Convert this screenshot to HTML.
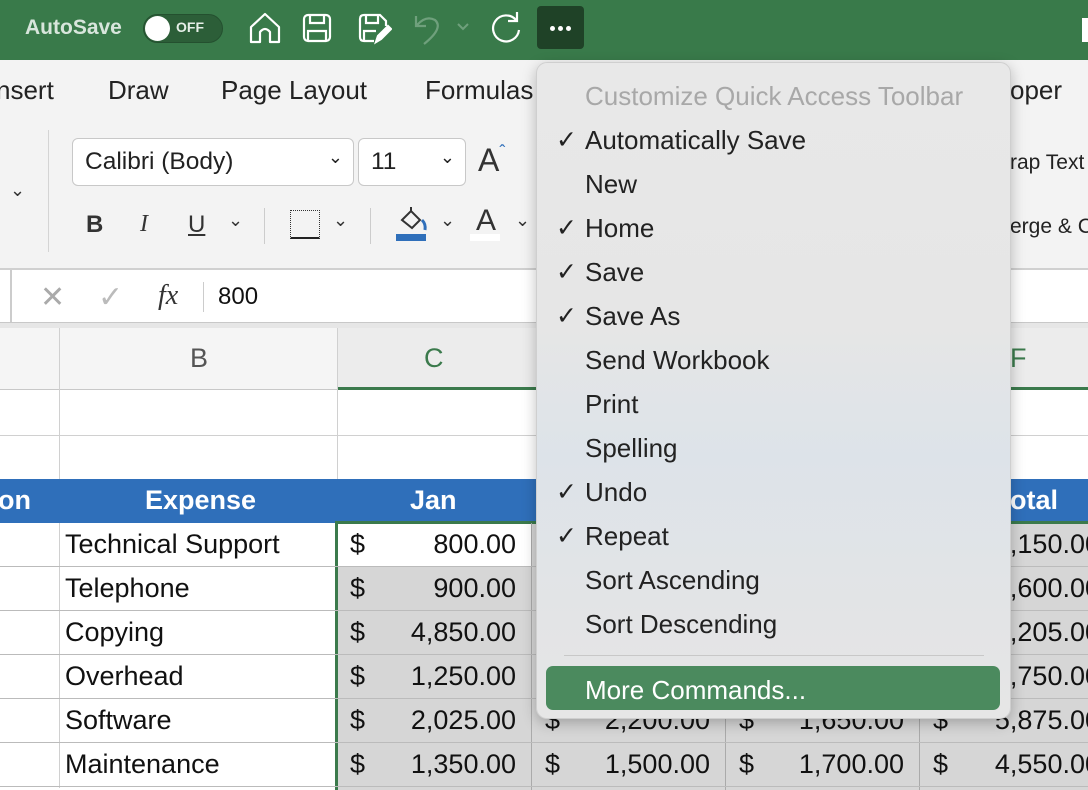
<!DOCTYPE html>
<html><head><meta charset="utf-8"><style>
*{margin:0;padding:0;box-sizing:border-box}
body{width:1088px;height:790px;overflow:hidden;position:relative;background:#fff;font-family:"Liberation Sans",sans-serif}
.a{position:absolute;white-space:nowrap}
.top{left:0;top:0;width:1088px;height:60px;background:#397a4a}
.rib{left:0;top:60px;width:1088px;height:208px;background:#f3f3f3}
.tab{top:75px;font-size:26px;color:#222}
.box{background:#fff;border:1px solid #c8c8c8;border-radius:6px;height:48px;font-size:24.5px;color:#222;padding:9px 12px}
.cell{font-family:"Liberation Sans",sans-serif;font-size:27px;color:#111}
.gl{background:#d6d6d6}
.mi{left:585px;font-size:26px;color:#222}
.ck{left:556px;font-size:25px;color:#222}
</style></head><body>
<div class="a top"></div>
<div class="a" style="left:25px;top:16px;color:#d8e6dc;font-size:21px;font-weight:bold">AutoSave</div>
<div class="a" style="left:143px;top:14px;width:80px;height:29px;border-radius:15px;background:#2c5e38;border:1px solid #24502f"></div>
<div class="a" style="left:145px;top:16px;width:25px;height:25px;border-radius:50%;background:#fff"></div>
<div class="a" style="left:176px;top:19px;color:#e6efe8;font-size:14px;font-weight:bold">OFF</div>
<svg class="a" style="left:248px;top:12px" width="34" height="32" viewBox="0 0 34 32" fill="none" stroke="#fff" stroke-width="2.2" stroke-linejoin="round"><path d="M3 15 L17 2 L31 15 V30 H22 V20 Q17 14 12 20 V30 H3 Z"/></svg>
<svg class="a" style="left:302px;top:13px" width="30" height="30" viewBox="0 0 30 30" fill="none" stroke="#fff" stroke-width="2.2"><rect x="2" y="2" width="26" height="26" rx="4"/><path d="M8 2 V10 H22 V2 M6 28 V18 H24 V28"/></svg>
<svg class="a" style="left:358px;top:13px" width="34" height="32" viewBox="0 0 34 32" fill="none" stroke="#fff" stroke-width="2.2"><path d="M16 28 H6 Q2 28 2 24 V6 Q2 2 6 2 H22 L28 8 V13 M8 2 V10 H20 V2 M6 28 V18 H18"/><path d="M18 29 L20 23 L30 13 L33 16 L23 26 Z" fill="#fff"/></svg>
<svg class="a" style="left:412px;top:12px" width="34" height="34" viewBox="0 0 34 34" fill="none" stroke="#6fa07c" stroke-width="2.2"><path d="M4 4 V14 H14 M5 13 Q14 3 23 8 Q32 16 12 32"/></svg>
<svg class="a" style="left:456px;top:22px" width="14" height="10" viewBox="0 0 14 10" fill="none" stroke="#6fa07c" stroke-width="2"><path d="M2 2 L7 7 L12 2"/></svg>
<svg class="a" style="left:488px;top:10px" width="36" height="36" viewBox="0 0 36 36" fill="none" stroke="#fff" stroke-width="2.2"><path d="M28 10 A13 13 0 1 0 31 20"/><path d="M29 2 V11 H20"/></svg>
<div class="a" style="left:537px;top:6px;width:47px;height:43px;background:#1f4227;border-radius:4px"></div>
<div class="a" style="left:550px;top:26px;width:5px;height:5px;border-radius:50%;background:#fff"></div>
<div class="a" style="left:558px;top:26px;width:5px;height:5px;border-radius:50%;background:#fff"></div>
<div class="a" style="left:566px;top:26px;width:5px;height:5px;border-radius:50%;background:#fff"></div>
<div class="a" style="left:1082px;top:18px;width:6px;height:24px;background:#fff"></div>

<div class="a rib"></div>
<div class="a tab" style="left:-4px">nsert</div>
<div class="a tab" style="left:108px">Draw</div>
<div class="a tab" style="left:221px">Page Layout</div>
<div class="a tab" style="left:425px">Formulas</div>
<div class="a tab" style="left:1010px">oper</div>
<div class="a" style="left:48px;top:130px;width:1px;height:122px;background:#d4d4d4"></div>
<div class="a" style="left:10px;top:180px;font-size:18px;color:#333">⌄</div>
<div class="a box" style="left:72px;top:138px;width:282px">Calibri (Body)<span style="position:absolute;right:10px;top:8px;font-size:18px">⌄</span></div>
<div class="a box" style="left:358px;top:138px;width:108px">11<span style="position:absolute;right:10px;top:8px;font-size:18px">⌄</span></div>
<div class="a" style="left:478px;top:142px;font-size:32px;color:#333">A<span style="color:#2f6fba;font-size:18px;vertical-align:top">ˆ</span></div>
<div class="a" style="left:86px;top:211px;font-size:24px;font-weight:bold;color:#333">B</div>
<div class="a" style="left:140px;top:211px;font-size:24px;font-style:italic;font-family:'Liberation Serif';color:#333">I</div>
<div class="a" style="left:188px;top:211px;font-size:24px;text-decoration:underline;color:#333">U</div>
<div class="a" style="left:228px;top:210px;font-size:18px;color:#333">⌄</div>
<div class="a" style="left:264px;top:208px;width:1px;height:36px;background:#ccc"></div>
<div class="a" style="left:290px;top:210px;width:30px;height:29px;border:1px dotted #333;border-bottom:2px solid #222"></div>
<div class="a" style="left:333px;top:210px;font-size:18px;color:#333">⌄</div>
<div class="a" style="left:370px;top:208px;width:1px;height:36px;background:#ccc"></div>
<svg class="a" style="left:398px;top:206px" width="32" height="28" viewBox="0 0 32 28" fill="none" stroke="#333" stroke-width="2"><path d="M4 14 L13 5 L22 14 L14 22 Z M13 5 L13 1"/><path d="M24 14 Q28 18 27 24" stroke="#2f6fba" stroke-width="3"/></svg>
<div class="a" style="left:396px;top:234px;width:30px;height:7px;background:#2f6fba"></div>
<div class="a" style="left:440px;top:210px;font-size:18px;color:#333">⌄</div>
<div class="a" style="left:476px;top:204px;font-size:30px;color:#333">A</div>
<div class="a" style="left:470px;top:234px;width:30px;height:7px;background:#fff"></div>
<div class="a" style="left:515px;top:210px;font-size:18px;color:#333">⌄</div>
<div class="a" style="left:1010px;top:151px;font-size:21px;color:#222">rap Text</div>
<div class="a" style="left:1010px;top:215px;font-size:21px;color:#222">erge &amp; C</div>

<div class="a" style="left:0;top:268px;width:1088px;height:2px;background:#d0d0d0"></div>
<div class="a" style="left:0;top:270px;width:1088px;height:52px;background:#fff"></div>
<div class="a" style="left:0;top:270px;width:12px;height:52px;border-right:2px solid #ccc"></div>
<div class="a" style="left:40px;top:280px;font-size:30px;color:#aaa">✕</div>
<div class="a" style="left:98px;top:280px;font-size:30px;color:#bbb">✓</div>
<div class="a" style="left:158px;top:280px;font-size:28px;font-style:italic;font-family:'Liberation Serif';color:#333">fx</div>
<div class="a" style="left:203px;top:282px;width:1px;height:30px;background:#ccc"></div>
<div class="a" style="left:218px;top:283px;font-size:24px;color:#111">800</div>
<div class="a" style="left:0;top:322px;width:1088px;height:6px;background:#e6e6e6;border-top:1px solid #c8c8c8"></div>

<div class="a" style="left:0;top:328px;width:1088px;height:62px;background:#f5f5f5;border-bottom:1px solid #c8c8c8"></div>
<div class="a" style="left:337px;top:328px;width:200px;height:62px;background:#ececec;border-bottom:3px solid #3b7a4c"></div>
<div class="a" style="left:919px;top:328px;width:169px;height:62px;background:#ececec;border-bottom:3px solid #3b7a4c"></div>
<div class="a" style="left:59px;top:328px;width:1px;height:460px;background:#d0d0d0"></div>
<div class="a" style="left:337px;top:328px;width:1px;height:151px;background:#d0d0d0"></div>
<div class="a" style="left:190px;top:343px;font-size:27px;color:#555">B</div>
<div class="a" style="left:424px;top:343px;font-size:27px;color:#3b7a4c">C</div>
<div class="a" style="left:1010px;top:343px;font-size:27px;color:#3b7a4c">F</div>
<div class="a" style="left:0;top:435px;width:1088px;height:1px;background:#d0d0d0"></div>
<div class="a" style="left:0;top:479px;width:1088px;height:44px;background:#2f6fba"></div>
<div class="a cell" style="left:-2px;top:485px;color:#fff;font-weight:bold">on</div>
<div class="a cell" style="left:145px;top:485px;color:#fff;font-weight:bold">Expense</div>
<div class="a cell" style="left:410px;top:485px;color:#fff;font-weight:bold">Jan</div>
<div class="a cell" style="left:1010px;top:485px;color:#fff;font-weight:bold">otal</div>

<div class="a gl" style="left:337px;top:523px;width:751px;height:267px"></div>
<div class="a" style="left:337px;top:523px;width:194px;height:44px;background:#fff"></div>
<div class="a" style="left:335px;top:521px;width:3px;height:269px;background:#3b7a4c"></div>
<div class="a" style="left:335px;top:521px;width:753px;height:3px;background:#3b7a4c"></div>
<div class="a" style="left:531px;top:523px;width:1px;height:267px;background:#aaa"></div>
<div class="a" style="left:725px;top:523px;width:1px;height:267px;background:#aaa"></div>
<div class="a" style="left:919px;top:523px;width:1px;height:267px;background:#aaa"></div>
<div class="a" style="left:0;top:566px;width:1088px;height:1px;background:#bbb"></div>
<div class="a" style="left:0;top:610px;width:1088px;height:1px;background:#bbb"></div>
<div class="a" style="left:0;top:654px;width:1088px;height:1px;background:#bbb"></div>
<div class="a" style="left:0;top:698px;width:1088px;height:1px;background:#bbb"></div>
<div class="a" style="left:0;top:742px;width:1088px;height:1px;background:#bbb"></div>
<div class="a" style="left:0;top:786px;width:1088px;height:1px;background:#bbb"></div>

<div class="a cell" style="left:65px;top:529px">Technical Support</div>
<div class="a cell" style="left:65px;top:573px">Telephone</div>
<div class="a cell" style="left:65px;top:617px">Copying</div>
<div class="a cell" style="left:65px;top:661px">Overhead</div>
<div class="a cell" style="left:65px;top:705px">Software</div>
<div class="a cell" style="left:65px;top:749px">Maintenance</div>

<div class="a cell" style="left:350px;top:529px">$</div><div class="a cell" style="right:572px;top:529px">800.00</div>
<div class="a cell" style="left:350px;top:573px">$</div><div class="a cell" style="right:572px;top:573px">900.00</div>
<div class="a cell" style="left:350px;top:617px">$</div><div class="a cell" style="right:572px;top:617px">4,850.00</div>
<div class="a cell" style="left:350px;top:661px">$</div><div class="a cell" style="right:572px;top:661px">1,250.00</div>
<div class="a cell" style="left:350px;top:705px">$</div><div class="a cell" style="right:572px;top:705px">2,025.00</div>
<div class="a cell" style="left:350px;top:749px">$</div><div class="a cell" style="right:572px;top:749px">1,350.00</div>
<div class="a cell" style="left:545px;top:705px">$</div><div class="a cell" style="right:378px;top:705px">2,200.00</div>
<div class="a cell" style="left:545px;top:749px">$</div><div class="a cell" style="right:378px;top:749px">1,500.00</div>
<div class="a cell" style="left:739px;top:705px">$</div><div class="a cell" style="right:184px;top:705px">1,650.00</div>
<div class="a cell" style="left:739px;top:749px">$</div><div class="a cell" style="right:184px;top:749px">1,700.00</div>
<div class="a cell" style="left:933px;top:529px">$</div><div class="a cell" style="right:-12px;top:529px">2,150.00</div>
<div class="a cell" style="left:933px;top:573px">$</div><div class="a cell" style="right:-12px;top:573px">2,600.00</div>
<div class="a cell" style="left:933px;top:617px">$</div><div class="a cell" style="right:-12px;top:617px">9,205.00</div>
<div class="a cell" style="left:933px;top:661px">$</div><div class="a cell" style="right:-12px;top:661px">3,750.00</div>
<div class="a cell" style="left:933px;top:705px">$</div><div class="a cell" style="right:-12px;top:705px">5,875.00</div>
<div class="a cell" style="left:933px;top:749px">$</div><div class="a cell" style="right:-12px;top:749px">4,550.00</div>

<div class="a" style="left:536px;top:62px;width:475px;height:657px;border-radius:11px;background:linear-gradient(180deg,#e8e8e8 0%,#e6e6e6 40%,#dde3e9 60%,#e3e4e6 85%,#e6e6e6 100%);border:1px solid #cfcfcf;box-shadow:0 4px 14px rgba(0,0,0,.25)"></div>
<div class="a mi" style="top:81px;color:#a8a8a8">Customize Quick Access Toolbar</div>
<div class="a ck" style="top:125px">✓</div><div class="a mi" style="top:125px">Automatically Save</div>
<div class="a mi" style="top:169px">New</div>
<div class="a ck" style="top:213px">✓</div><div class="a mi" style="top:213px">Home</div>
<div class="a ck" style="top:257px">✓</div><div class="a mi" style="top:257px">Save</div>
<div class="a ck" style="top:301px">✓</div><div class="a mi" style="top:301px">Save As</div>
<div class="a mi" style="top:345px">Send Workbook</div>
<div class="a mi" style="top:389px">Print</div>
<div class="a mi" style="top:433px">Spelling</div>
<div class="a ck" style="top:477px">✓</div><div class="a mi" style="top:477px">Undo</div>
<div class="a ck" style="top:521px">✓</div><div class="a mi" style="top:521px">Repeat</div>
<div class="a mi" style="top:565px">Sort Ascending</div>
<div class="a mi" style="top:609px">Sort Descending</div>
<div class="a" style="left:564px;top:655px;width:420px;height:1px;background:#c8c8c8"></div>
<div class="a" style="left:546px;top:666px;width:454px;height:44px;border-radius:7px;background:#4b8a5e"></div>
<div class="a mi" style="top:675px;color:#fff">More Commands...</div>
</body></html>
